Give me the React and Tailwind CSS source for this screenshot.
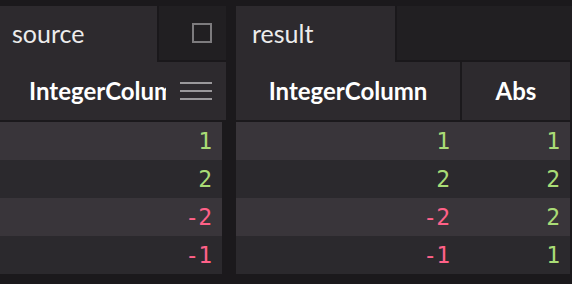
import React from "react";

const label = { fontFamily: "Lato, 'Open Sans', sans-serif" };
const mono = { fontFamily: "'DejaVu Sans Mono', 'Liberation Mono', monospace" };

function Num({ v }) {
  const neg = v < 0;
  return (
    <span className={neg ? "text-[#ff6188]" : "text-[#a9dc76]"}>{v}</span>
  );
}

export default function App() {
  const left = [1, 2, -2, -1];
  const right = [
    [1, 1],
    [2, 2],
    [-2, 2],
    [-1, 1],
  ];
  const rowBg = (i) => (i % 2 === 0 ? "bg-[#39353a]" : "bg-[#2b292d]");
  return (
    <div className="w-[572px] h-[284px] bg-[#1b191c] pt-[6px] flex overflow-hidden">
      {/* Left panel */}
      <div className="w-[226px] flex flex-col">
        <div className="h-[56px] flex">
          <div
            className="w-[157px] bg-[#2d2a2e] flex items-center pl-[12px] text-[25px] text-[#ececec]"
            style={label}
          >
            source
          </div>
          <div className="flex-1 bg-[#211f22] border-l-2 border-b-2 border-[#1a181b] flex items-center justify-end pr-[14px]">
            <div className="w-[20px] h-[20px] border-2 border-[#7d7b7e]" />
          </div>
        </div>
        <div className="h-[58px] bg-[#2d2a2e] flex">
          <div
            className="w-[166px] overflow-hidden whitespace-nowrap pl-[29px] flex items-center text-[24px] font-bold text-white"
            style={label}
          >
            IntegerColumn
          </div>
          <div className="flex-1 flex flex-col justify-center gap-[6px] pl-[14px] pr-[14px]">
            <div className="h-[2px] bg-[#9a989b]" />
            <div className="h-[2px] bg-[#9a989b]" />
            <div className="h-[2px] bg-[#9a989b]" />
          </div>
        </div>
        <div className="mt-[2px] w-[222px] flex flex-col">
          {left.map((v, i) => (
            <div
              key={i}
              className={`h-[38px] ${rowBg(i)} flex items-center justify-end pr-[11px] text-[23px] tracking-[-1px]`}
              style={mono}
            >
              <Num v={v} />
            </div>
          ))}
        </div>
      </div>

      {/* Right panel */}
      <div className="ml-[10px] w-[336px] flex flex-col">
        <div className="h-[56px] flex">
          <div
            className="w-[159px] bg-[#2d2a2e] flex items-center pl-[16px] text-[25px] text-[#ececec]"
            style={label}
          >
            result
          </div>
          <div className="flex-1 bg-[#211f22] border-l-2 border-b-2 border-[#1a181b]" />
        </div>
        <div className="h-[58px] flex gap-[2px]">
          <div
            className="w-[224px] bg-[#2d2a2e] flex items-center justify-center text-[24px] font-bold text-white"
            style={label}
          >
            IntegerColumn
          </div>
          <div
            className="w-[108px] bg-[#2d2a2e] flex items-center justify-center text-[24px] font-bold text-white"
            style={label}
          >
            Abs
          </div>
        </div>
        <div className="mt-[2px] w-[334px] flex flex-col">
          {right.map(([a, b], i) => (
            <div
              key={i}
              className={`h-[38px] ${rowBg(i)} flex items-center text-[23px] tracking-[-1px]`}
              style={mono}
            >
              <div className="w-[224px] text-right pr-[11px]">
                <Num v={a} />
              </div>
              <div className="w-[110px] text-right pr-[11px]">
                <Num v={b} />
              </div>
            </div>
          ))}
        </div>
      </div>
    </div>
  );
}
